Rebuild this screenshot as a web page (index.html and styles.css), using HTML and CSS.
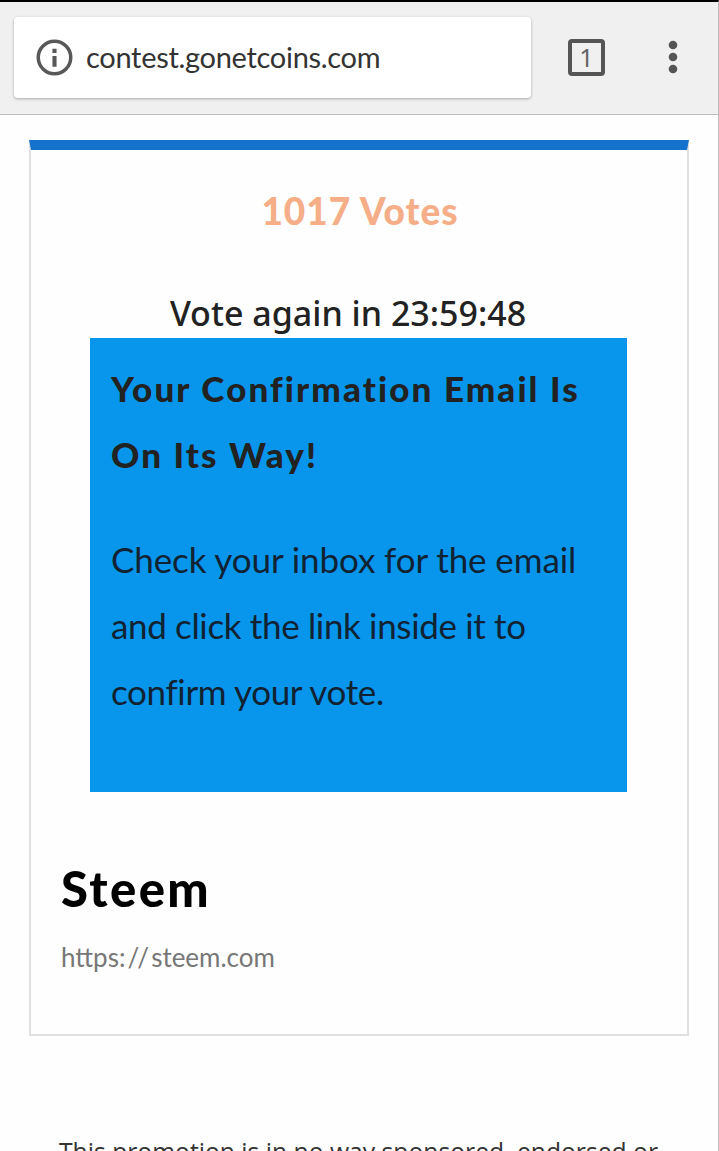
FILE: index.html
```
<!DOCTYPE html>
<html lang="en">
<head>
  <meta charset="UTF-8">
  <title>Steem - Vote</title>
  <link rel="stylesheet" href="styles.css">
</head>
<body>

  <header class="toolbar">
    <div class="address">
      <svg class="info" viewBox="0 0 36 36">
        <circle cx="18" cy="18" r="15.8" fill="none" stroke="#585858" stroke-width="3.4"/>
        <path d="M16 9.5h4v4h-4zM16 16.5h4v10.5h-4z" fill="#585858"/>
      </svg>
      <span class="url">contest.gonetcoins.com</span>
    </div>
    <div class="tabs">1</div>
    <svg class="menu" viewBox="0 0 10 34">
      <g fill="#555">
        <circle cx="5" cy="5" r="4.3"/>
        <circle cx="5" cy="17" r="4.3"/>
        <circle cx="5" cy="29" r="4.3"/>
      </g>
    </svg>
  </header>

  <main class="card">
    <h3 class="votes">1017 Votes</h3>
    <p class="countdown">Vote again in 23:59:48</p>

    <div class="notice">
      <h4>Your Confirmation Email Is<br>On Its Way!</h4>
      <p>Check your inbox for the email<br><span class="tight">and click the link inside it to<br>confirm your vote.</span></p>
    </div>

    <h2>Steem</h2>
    <a class="site">https:<span class="slashes">//</span>steem.com</a>
  </main>

  <footer>This promotion is in no way sponsored, endorsed or</footer>

</body>
</html>
```
FILE: styles.css
```
* {
  box-sizing: border-box;
}

body {
  margin: 0;
  height: 1151px;
  overflow: hidden;
  background-color: #fefefe;
  border-top: 2px solid #000;
  border-right: 1px solid #bbb;
  font-family: Lato, sans-serif;
  color: #222;
}

h2, h3, h4, p {
  margin: 0;
}

.toolbar {
  display: flex;
  align-items: center;
  height: 113px;
  padding: 0 0 2px 14px;
  background-color: #f0f0f0;
  border-bottom: 1px solid #bdbdbd;
}

.address {
  display: flex;
  align-items: center;
  width: 517px;
  height: 81px;
  padding-left: 22px;
  background-color: #fff;
  border-radius: 4px;
  box-shadow: 0 1px 3px rgba(0, 0, 0, 0.3);
}

.info {
  width: 37px;
  height: 37px;
}

.url {
  margin-left: 13px;
  padding-bottom: 2px;
  font-size: 29px;
  letter-spacing: -0.3px;
  white-space: nowrap;
  color: #333;
}

.tabs {
  width: 37px;
  height: 37px;
  margin-left: 37px;
  border: 4px solid #555;
  border-radius: 4px;
  font-family: "Noto Sans", sans-serif;
  font-size: 25px;
  line-height: 28px;
  text-align: center;
  color: #666;
}

.menu {
  width: 10px;
  height: 34px;
  margin-left: 63px;
}

.card {
  width: 660px;
  height: 896px;
  margin: 25px 0 0 29px;
  padding: 36px 30px 0;
  border: 2px solid #e0e0e0;
  border-top: 10px solid #1572cc;
}

.votes {
  padding-left: 2px;
  font-size: 37px;
  font-weight: 900;
  line-height: 50px;
  letter-spacing: 1px;
  text-align: center;
  color: #f5ae87;
}

.countdown {
  margin: 52px 22px 0 0;
  font-family: "Noto Sans", sans-serif;
  font-size: 34px;
  font-weight: 500;
  line-height: 50px;
  text-align: center;
}

.notice {
  width: 537px;
  height: 454px;
  margin-left: 29px;
  padding: 17px 21px 0;
  background-color: #0796eb;
  font-size: 35px;
  line-height: 66px;
  white-space: nowrap;
}

.notice h4 {
  font-size: 35px;
  font-weight: 900;
  letter-spacing: 2.1px;
}

.notice p {
  margin-top: 39px;
  letter-spacing: -0.1px;
  color: #123;
}

.notice .tight {
  letter-spacing: -0.35px;
}

.card h2 {
  margin-top: 67px;
  font-size: 49px;
  font-weight: 900;
  line-height: 58px;
  letter-spacing: 2.4px;
  color: #000;
}

.site {
  display: block;
  margin-top: 24px;
  font-size: 26px;
  line-height: 32px;
  color: #777;
}

.slashes {
  margin: 0 -2px 0 2px;
  letter-spacing: 4px;
}

footer {
  margin: 98px 0 0 59px;
  font-family: "Open Sans", sans-serif;
  font-size: 24.7px;
  line-height: 36px;
  white-space: nowrap;
  color: #333;
}
```
